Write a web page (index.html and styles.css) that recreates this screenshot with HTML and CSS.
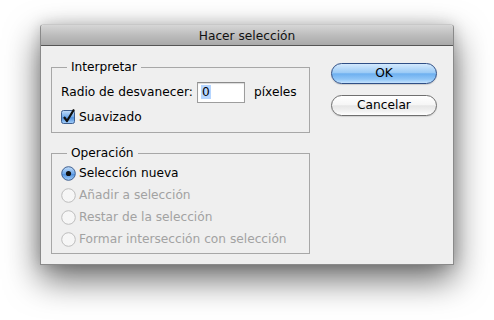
FILE: index.html
```html
<!DOCTYPE html>
<html lang="es">
<head>
<meta charset="utf-8">
<title>Hacer selección</title>
<link rel="stylesheet" href="styles.css">
</head>
<body>
<div class="page">
  <div class="window">
    <div class="titlebar">Hacer selección</div>
    <div class="body">
      <div class="left">
        <fieldset class="group g1">
          <legend>Interpretar</legend>
          <div class="row r-input">
            <span class="label">Radio de desvanecer:</span>
            <span class="field"><span class="sel">0</span></span>
            <span class="unit">píxeles</span>
          </div>
          <div class="row r-check">
            <svg class="check" width="15" height="15" viewBox="0 0 15 15">
              <defs>
                <linearGradient id="cb" x1="0" y1="0" x2="0" y2="1">
                  <stop offset="0" stop-color="#c4defa"/>
                  <stop offset="0.5" stop-color="#6fa9ea"/>
                  <stop offset="0.55" stop-color="#4f90de"/>
                  <stop offset="1" stop-color="#a6d0fa"/>
                </linearGradient>
              </defs>
              <rect x="0.5" y="1.5" width="13" height="13" rx="2" fill="url(#cb)" stroke="#3f5f8f"/>
              <path d="M3 8 L6 12 L13 0.5" fill="none" stroke="#111" stroke-width="2.2" stroke-linejoin="round"/>
            </svg>
            <span>Suavizado</span>
          </div>
        </fieldset>
        <fieldset class="group g2">
          <legend>Operación</legend>
          <div class="row radio">
            <svg class="rb" width="15" height="15" viewBox="0 0 15 15">
              <defs>
                <linearGradient id="rbg" x1="0" y1="0" x2="0" y2="1">
                  <stop offset="0" stop-color="#c4defa"/>
                  <stop offset="0.5" stop-color="#6fa9ea"/>
                  <stop offset="0.55" stop-color="#4f90de"/>
                  <stop offset="1" stop-color="#a6d0fa"/>
                </linearGradient>
              </defs>
              <circle cx="7.5" cy="7.5" r="6.8" fill="url(#rbg)" stroke="#3f5f8f"/>
              <circle cx="7.5" cy="7.5" r="2.6" fill="#111"/>
            </svg>
            <span>Selección nueva</span>
          </div>
          <div class="row radio off">
            <svg class="rb" width="15" height="15" viewBox="0 0 15 15">
              <circle cx="7.5" cy="7.5" r="6.8" fill="#f6f6f6" stroke="#bdbdbd"/>
            </svg>
            <span>Añadir a selección</span>
          </div>
          <div class="row radio off">
            <svg class="rb" width="15" height="15" viewBox="0 0 15 15">
              <circle cx="7.5" cy="7.5" r="6.8" fill="#f6f6f6" stroke="#bdbdbd"/>
            </svg>
            <span>Restar de la selección</span>
          </div>
          <div class="row radio off">
            <svg class="rb" width="15" height="15" viewBox="0 0 15 15">
              <circle cx="7.5" cy="7.5" r="6.8" fill="#f6f6f6" stroke="#bdbdbd"/>
            </svg>
            <span>Formar intersección con selección</span>
          </div>
        </fieldset>
      </div>
      <div class="right">
        <div class="btn ok">OK</div>
        <div class="btn cancel">Cancelar</div>
      </div>
    </div>
  </div>
</div>
</body>
</html>
```
FILE: styles.css
```css
html, body {
  margin: 0;
  padding: 0;
  background: #ffffff;
  height: 100%;
}
body {
  font-family: "DejaVu Sans", "Liberation Sans", sans-serif;
  font-size: 12.2px;
  color: #000;
}
.page {
  box-sizing: border-box;
  min-height: 320px;
  padding: 24px 0 0 40px;
}
.window {
  width: 414px;
  height: 241px;
  box-sizing: border-box;
  background: #efefef;
  border: 1px solid #8a8a8a;
  border-top-color: #c8c8c8;
  border-radius: 4px 4px 0 0;
  box-shadow: 0 14px 34px rgba(0, 0, 0, 0.6), 0 0 14px rgba(0, 0, 0, 0.15);
  overflow: hidden;
}
.titlebar {
  height: 20px;
  line-height: 22px;
  text-align: center;
  background: linear-gradient(#d6d6d6, #bdbdbd 50%, #a9a9a9);
  border-bottom: 1px solid #555;
  color: #111;
}
.body {
  display: flex;
  padding: 13px 0 0 10px;
}
.left {
  width: 259px;
  display: flex;
  flex-direction: column;
  gap: 12px;
}
.group {
  margin: 0;
  border: 1px solid #a7a7a7;
  padding: 0 0 0 9px;
  min-width: 0;
}
.group legend {
  padding: 0 4px;
  margin-left: 6px;
  line-height: 16px;
}
.g1 {
  padding-top: 6px;
  padding-bottom: 5px;
}
.g2 {
  padding-top: 1px;
  padding-bottom: 3px;
}
.row {
  display: flex;
  align-items: center;
}
.r-input {
  height: 22px;
}
.label {
  width: 136px;
}
.field {
  box-sizing: border-box;
  width: 48px;
  height: 21px;
  border: 1px solid #9d9d9d;
  border-top-color: #8a8a8a;
  background: #fff;
  box-shadow: inset 0 1px 1px rgba(0, 0, 0, 0.15);
  padding: 2px 0 0 3px;
  line-height: 15px;
}
.sel {
  background: #b5d5ff;
  padding: 0 1px;
}
.unit {
  margin-left: 9px;
}
.r-check {
  height: 20px;
  margin-top: 4px;
}
.check {
  margin-right: 3px;
  margin-top: -1px;
}
.radio {
  height: 22px;
}
.rb {
  margin-right: 3px;
}
.off {
  color: #a2a2a2;
}
.right {
  margin-left: 21px;
  margin-top: 4px;
  display: flex;
  flex-direction: column;
  gap: 11px;
}
.btn {
  box-sizing: border-box;
  width: 106px;
  height: 21px;
  border-radius: 11px;
  text-align: center;
  line-height: 19px;
}
.ok {
  border: 1px solid #2f4f86;
  background: linear-gradient(#d4e9fd, #9ccbf6 45%, #6eb0f0 52%, #8fc5f7 80%, #c6e3fd);
  box-shadow: 0 1px 1px rgba(0, 0, 0, 0.15);
}
.cancel {
  border: 1px solid #6f6f6f;
  background: linear-gradient(#ffffff, #f6f6f6 45%, #e6e6e6 52%, #f2f2f2 80%, #ffffff);
  box-shadow: 0 1px 1px rgba(0, 0, 0, 0.12);
}
```
